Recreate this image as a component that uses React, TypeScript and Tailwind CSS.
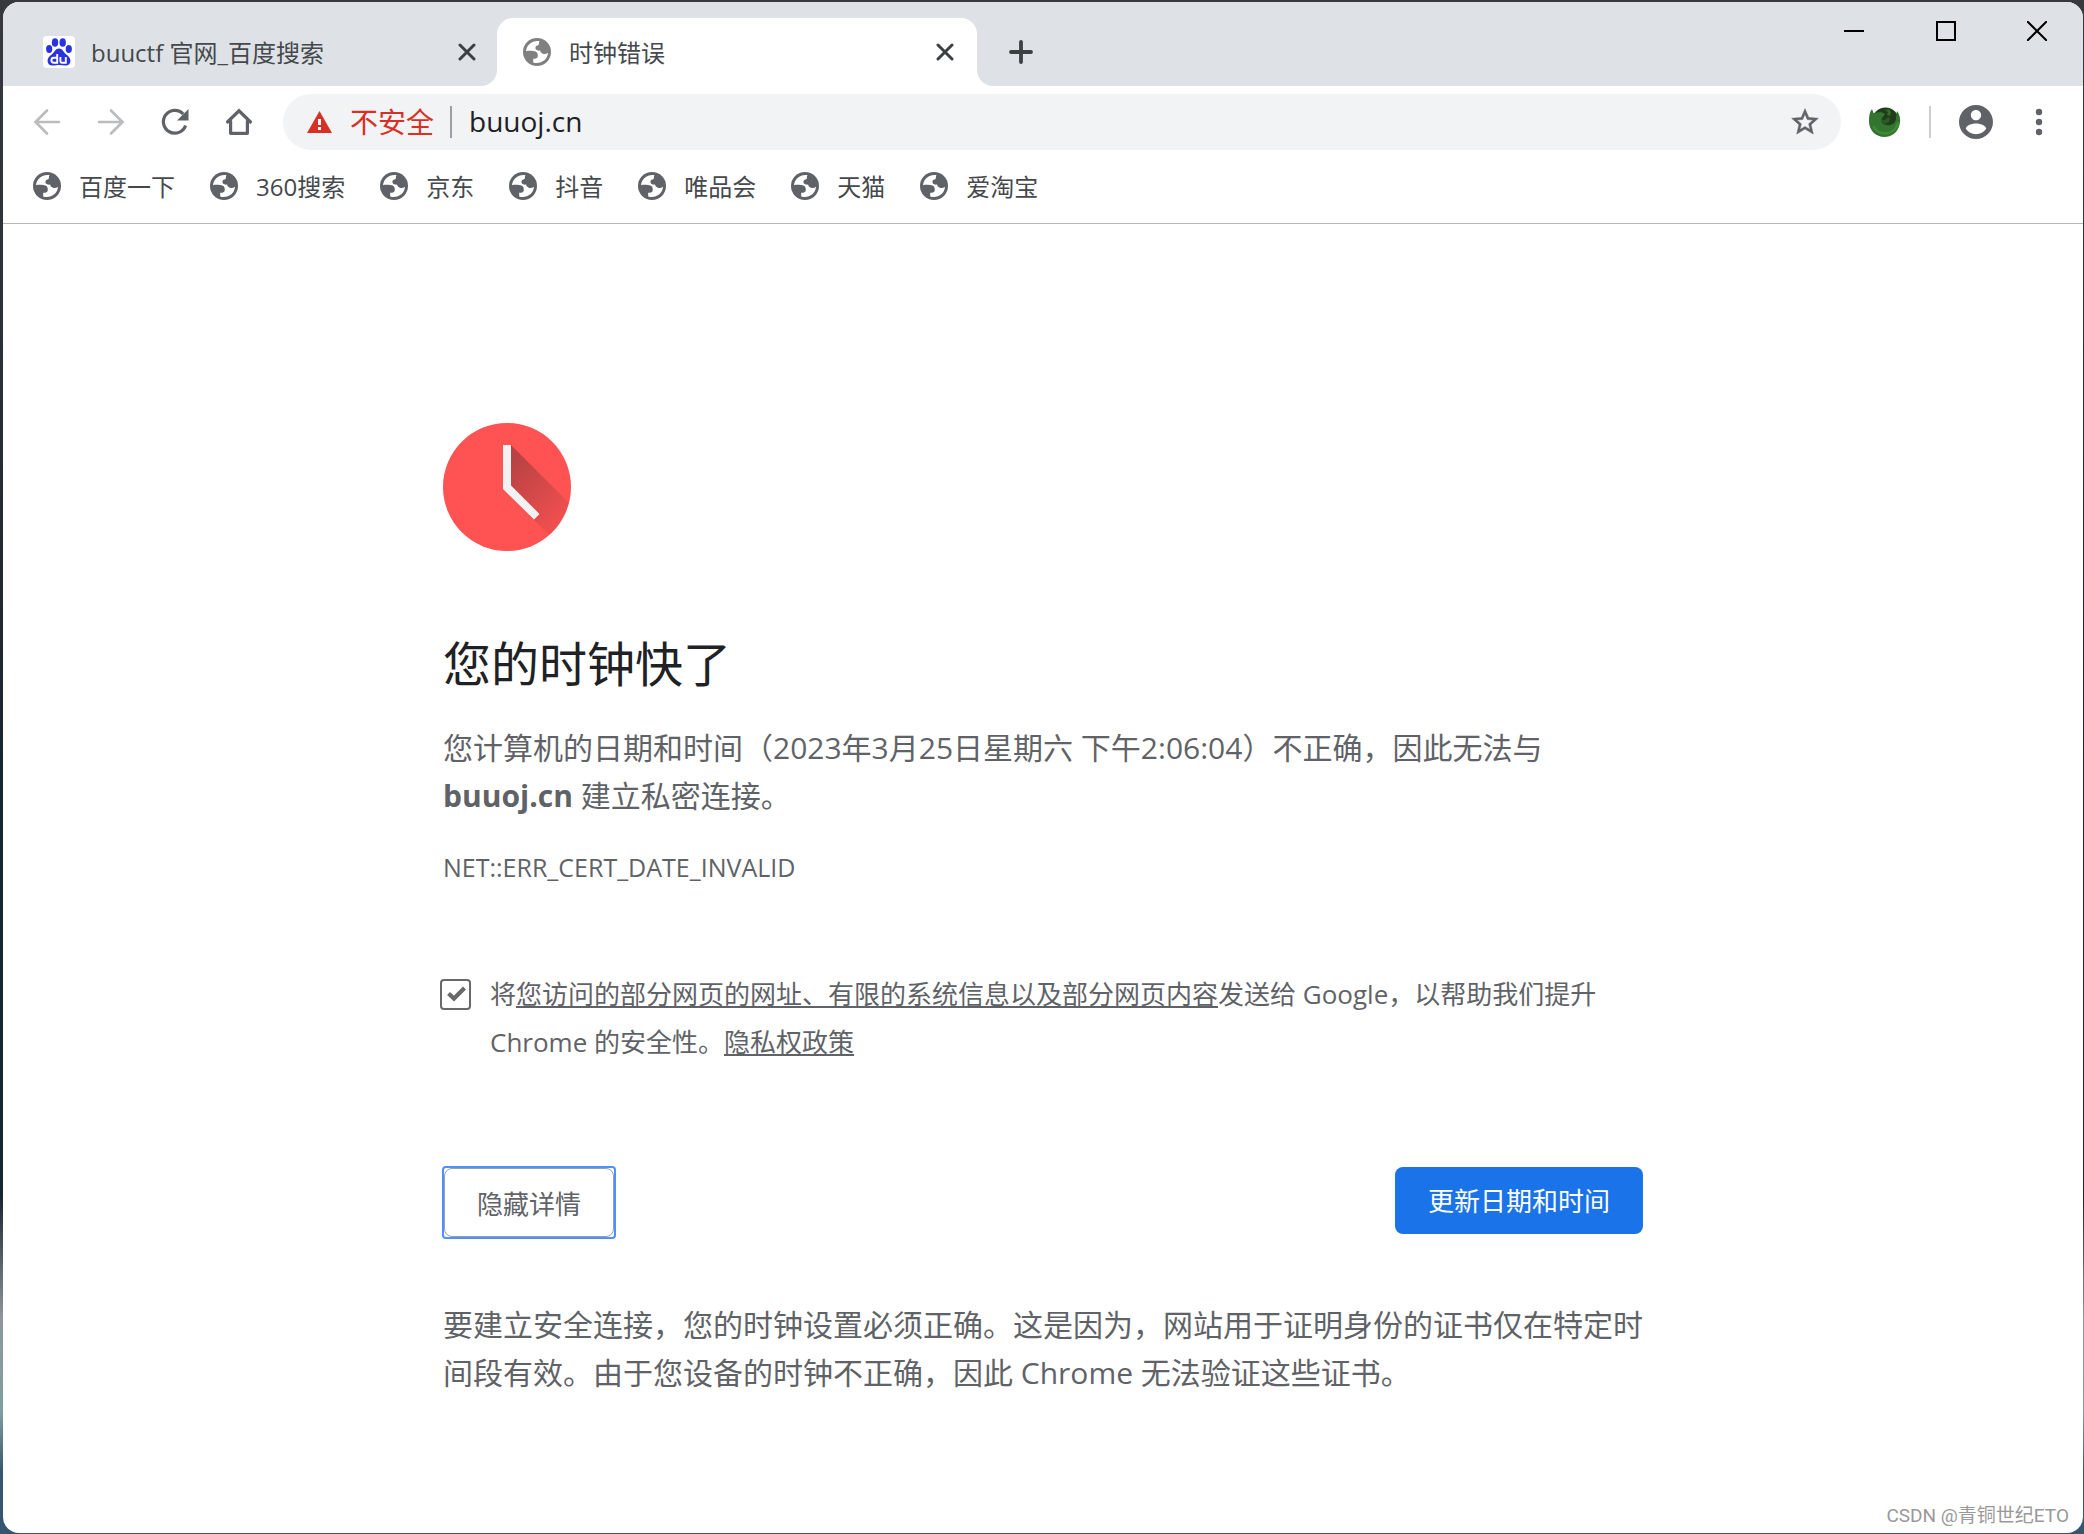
import clsx from 'clsx'
import type { ReactNode } from 'react'

const BOOKMARKS = ['百度一下', '360搜索', '京东', '抖音', '唯品会', '天猫', '爱淘宝']

function GlobeIcon({ className }: { className?: string }) {
  return (
    <svg viewBox="0 0 28 28" className={clsx('size-7 shrink-0', className)} aria-hidden="true">
      <circle cx="14" cy="14" r="14" fill="currentColor" />
      <path
        fill="#fff"
        d="M16.500 3.200C9.500 2 3.500 7 3 13.200c2.200-.5 4.500-.4 7.200-.1 3.300.3 4.700 1.800 4.600 4.600 0 1.500-.8 2.700-2.600 3l-2 .1v3.600c7 2.200 14.300-2.400 14.800-9.700-1.500 1.200-3.300 1.500-5.200 1-1.700-.5-2.500-1.600-2.700-3.100-1.700.2-3.200 0-4.100-1-1.200-1.500-.5-3.800 1.400-4.100 1.200-.2 1.600-.7 1.500-1.900-.1-1 .1-1.600.6-2.400z"
      />
    </svg>
  )
}

function BaiduIcon() {
  return (
    <svg viewBox="0 0 32 32" className="size-8 shrink-0" aria-hidden="true">
      <rect width="32" height="32" rx="4" fill="#fff" />
      <g fill="#2932e1">
        <ellipse cx="12" cy="6.500" rx="3.200" ry="4.300" />
        <ellipse cx="19.700" cy="6.500" rx="3.200" ry="4.300" />
        <ellipse cx="6.200" cy="13" rx="3.100" ry="4" />
        <ellipse cx="25.800" cy="13" rx="3.100" ry="4" />
        <path d="M16 12.500c-3.300 0-4.300 3.200-6.500 5.300C7.300 19.700 4.600 21.300 4.600 24.700c0 3.200 2.300 4.900 5.200 4.900 2.200 0 4-.5 6.200-.5s4 .5 6.200.5c2.900 0 5.200-1.700 5.200-4.900 0-3.400-2.700-5-4.900-6.900-2.200-2.100-3.200-5.300-6.500-5.300z" />
      </g>
      <g fill="none" stroke="#fff" strokeWidth="1.900">
        <path d="M14.200 18v8.800h-3.300c-1.500 0-2.500-1-2.500-2.500s1-2.500 2.500-2.500h3.300" />
        <path d="M17.400 21v4c0 1.200.6 1.800 1.800 1.800h3.600V21" />
      </g>
    </svg>
  )
}

function ExtensionIcon() {
  return (
    <svg viewBox="0 0 32 32" className="size-8" aria-hidden="true">
      <circle cx="16.500" cy="15" r="13.500" fill="#1f3d1a" />
      <path
        fill="#33752f"
        d="M3 3l1.500 4L12 6l4 2-3 4-1 3c1 3 5 5 9 4 4-.8 6.500-4 6-8l1-6c3 4 4 9 2.500 14C28.500 27 22 31 15.500 31 7 31 0 24.500 0 15.500 0 10 .5 6 3 3z"
      />
      <path fill="#2a5a25" d="M12 13l4 1 3-3 2 1-1 4-4 2-4-2z" />
      <path fill="#3f8a38" d="M16 4l4-1 2 3-1 4-3-1 1-3z" opacity=".6" />
      <path fill="none" stroke="#449a3d" strokeWidth="2.500" strokeLinecap="round" d="M5 21c3 6 11 8 17 5 4-2 6-5 7-9" opacity=".6" />
    </svg>
  )
}

function CloseGlyph() {
  return (
    <svg viewBox="0 0 18 18" className="size-[18px]" stroke="#3c4043" strokeWidth="3" strokeLinecap="round" aria-hidden="true">
      <path d="M2 2l14 14M16 2L2 16" />
    </svg>
  )
}

function IconButton({ label, className, children }: { label: string; className?: string; children: ReactNode }) {
  return (
    <button type="button" aria-label={label} className={clsx('flex shrink-0 items-center justify-center', className)}>
      {children}
    </button>
  )
}

function TabStrip() {
  return (
    <div className="flex h-[84px] bg-[#dee1e6] text-2xl text-[#45494d]">
      <div className="flex w-[494px] items-center pt-4 pr-[21px] pl-10">
        <BaiduIcon />
        <span className="ml-4 flex-1 pt-0.5">buuctf 官网_百度搜索</span>
        <IconButton label="关闭标签页" className="size-[18px]">
          <CloseGlyph />
        </IconButton>
      </div>
      <div className="relative mt-4 flex w-[480px] items-center rounded-t-2xl bg-white pr-[23px] pl-[26px]">
        {/* flared feet of the active tab */}
        <div className="absolute bottom-0 -left-4 size-4 bg-white">
          <div className="size-4 rounded-br-2xl bg-[#dee1e6]" />
        </div>
        <div className="absolute -right-4 bottom-0 size-4 bg-white">
          <div className="size-4 rounded-bl-2xl bg-[#dee1e6]" />
        </div>
        <GlobeIcon className="text-[#808080]" />
        <span className="ml-[18px] flex-1 pt-0.5">时钟错误</span>
        <IconButton label="关闭标签页" className="size-[18px]">
          <CloseGlyph />
        </IconButton>
      </div>
      <IconButton label="新标签页" className="mt-4 ml-8 size-6 self-center">
        <svg viewBox="0 0 24 24" className="size-6" stroke="#3c4043" strokeWidth="3.800" strokeLinecap="round">
          <path d="M12 2v20M2 12h20" />
        </svg>
      </IconButton>
      <div className="ml-auto flex h-[58px]">
        <IconButton label="最小化" className="w-[92px]">
          <svg viewBox="0 0 20 20" className="size-5" stroke="#000" strokeWidth="2">
            <path d="M0 10h20" />
          </svg>
        </IconButton>
        <IconButton label="最大化" className="w-[91px]">
          <svg viewBox="0 0 20 20" className="size-5" fill="none" stroke="#000" strokeWidth="2">
            <path d="M1 1h18v18H1z" />
          </svg>
        </IconButton>
        <IconButton label="关闭" className="w-[92px]">
          <svg viewBox="0 0 20 20" className="size-5" stroke="#000" strokeWidth="2">
            <path d="M0 0l20 20M20 0L0 20" />
          </svg>
        </IconButton>
      </div>
    </div>
  )
}

function Toolbar() {
  return (
    <div className="flex items-center pt-2 pr-7 pl-[26px]">
      <div className="flex gap-7 pr-[26px] text-[#5f6368]">
        <IconButton label="后退" className="size-9 text-[#babcbe]">
          <svg viewBox="0 0 32 32" className="size-8" fill="none" stroke="currentColor" strokeWidth="2.700" strokeLinecap="round">
            <path d="M28 16H5M16 4.500L4.500 16 16 27.500" />
          </svg>
        </IconButton>
        <IconButton label="前进" className="size-9 text-[#babcbe]">
          <svg viewBox="0 0 32 32" className="size-8" fill="none" stroke="currentColor" strokeWidth="2.700" strokeLinecap="round">
            <path d="M4 16h23M16 4.500L27.500 16 16 27.500" />
          </svg>
        </IconButton>
        <IconButton label="重新加载" className="size-9">
          <svg viewBox="0 0 32 32" className="size-8" aria-hidden="true">
            <path fill="none" stroke="currentColor" strokeWidth="3.200" d="M26.600 19.500A11.400 11.400 0 1 1 24.200 8" />
            <path fill="currentColor" d="M29.500 3v11.500H18z" />
          </svg>
        </IconButton>
        <IconButton label="主页" className="size-9">
          <svg viewBox="0 0 32 32" className="size-8" fill="none" stroke="currentColor" strokeWidth="3.200" strokeLinejoin="round" strokeLinecap="round">
            <path d="M4.500 16L16 4.800 27.500 16" strokeLinejoin="miter" />
            <path d="M7.600 15v12.300h16.800V15" />
          </svg>
        </IconButton>
      </div>

      <div className="flex h-14 flex-1 items-center rounded-full bg-[#f1f3f4] pr-5 pl-6 text-[28px]">
        <svg viewBox="0 0 25 22" className="h-[22px] w-[25px]" aria-hidden="true">
          <path fill="#d93025" d="M12.500 0L25 22H0z" />
          <path fill="#fff" d="M11 8h3v6h-3zM11 16h3v3h-3z" />
        </svg>
        <span className="ml-[18px] text-[#d93025]">不安全</span>
        <span className="mr-[17px] ml-4 h-8 w-0.5 bg-[#9aa0a6]" />
        <input aria-label="地址栏" defaultValue="buuoj.cn" className="min-w-0 flex-1 bg-transparent pb-0.5 text-[#202124] outline-none" />
        <IconButton label="添加书签" className="size-8">
          <svg viewBox="0 0 24 24" className="size-[34px]" fill="#5f6368" aria-hidden="true">
            <path
              stroke="#5f6368"
              strokeWidth=".4"
              d="M22 9.240l-7.190-.62L12 2 9.190 8.630 2 9.240l5.460 4.730L5.820 21 12 17.270 18.180 21l-1.630-7.030L22 9.240zM12 15.400l-3.760 2.270 1-4.280-3.320-2.880 4.380-.38L12 6.100l1.710 4.040 4.380.38-3.320 2.880 1 4.280L12 15.400z"
            />
          </svg>
        </IconButton>
      </div>

      <IconButton label="扩展程序" className="ml-7 size-8">
        <ExtensionIcon />
      </IconButton>
      <span className="mx-7 h-8 w-0.5 bg-[#cdcfd2]" />
      <IconButton label="用户" className="size-[34px]">
        <svg viewBox="2 2 20 20" className="size-[34px]" fill="#5f6368" aria-hidden="true">
          <path d="M12 2C6.480 2 2 6.480 2 12s4.480 10 10 10 10-4.480 10-10S17.520 2 12 2zm0 3c1.660 0 3 1.340 3 3s-1.340 3-3 3-3-1.340-3-3 1.340-3 3-3zm0 14.200c-2.500 0-4.710-1.280-6-3.220.03-1.990 4-3.080 6-3.080 1.990 0 5.970 1.090 6 3.080-1.290 1.940-3.500 3.220-6 3.220z" />
        </svg>
      </IconButton>
      <IconButton label="菜单" className="ml-[30px] size-8">
        <svg viewBox="0 0 32 32" className="size-8" fill="#5f6368" aria-hidden="true">
          <circle cx="16" cy="6" r="3.200" />
          <circle cx="16" cy="16" r="3.200" />
          <circle cx="16" cy="26" r="3.200" />
        </svg>
      </IconButton>
    </div>
  )
}

function BookmarksBar() {
  return (
    <nav className="flex h-[74px] items-center gap-[35px] border-b border-[#b6b6b6] pb-0.5 pl-[30px] text-2xl text-[#45494d]">
      {BOOKMARKS.map((name) => (
        <a key={name} href="#" className="flex items-center gap-[18px]">
          <GlobeIcon className="text-[#5f6368]" />
          <span className="pt-0.5">{name}</span>
        </a>
      ))}
    </nav>
  )
}

function ClockIcon() {
  return (
    <svg viewBox="0 0 128 128" className="size-32" aria-hidden="true">
      <defs>
        <linearGradient id="hand-shadow" gradientUnits="userSpaceOnUse" x1="62" y1="45" x2="115" y2="98">
          <stop offset="0" stopColor="#212121" stopOpacity=".32" />
          <stop offset="1" stopColor="#212121" stopOpacity=".07" />
        </linearGradient>
        <clipPath id="clock-face">
          <circle cx="64" cy="64" r="64" />
        </clipPath>
      </defs>
      <circle cx="64" cy="64" r="64" fill="#ff5252" />
      <path clipPath="url(#clock-face)" fill="url(#hand-shadow)" d="M68 22l80 80v52L60 66z" />
      <path fill="#f2f2f2" d="M60 22h8v40.500l28.500 28.500-5.500 5.500L60 66z" />
    </svg>
  )
}

function ErrorPage() {
  return (
    <main className="mx-auto w-full max-w-[1200px] pt-[199px] text-[#5f6368]">
      <ClockIcon />
      <h1 className="mt-[84px] text-5xl leading-[58px] text-[#202124]">您的时钟快了</h1>
      <p className="mt-[31px] text-3xl leading-[48px]">
        您计算机的日期和时间（2023年3月25日星期六 下午2:06:04）不正确，因此无法与 <strong>buuoj.cn</strong> 建立私密连接。
      </p>
      <div className="mt-[23px] text-[25px] leading-[48px]">NET::ERR_CERT_DATE_INVALID</div>

      <div className="mt-[79px] -ml-[3px] flex text-[26px] leading-[48px]">
        <span className="mt-[9px] mr-[19px] grid size-[31px] shrink-0">
          <input
            id="report"
            type="checkbox"
            defaultChecked
            className="col-start-1 row-start-1 size-[31px] appearance-none rounded border-2 border-[#696969] bg-white"
          />
          <svg viewBox="0 0 31 31" className="pointer-events-none col-start-1 row-start-1 size-[31px]" fill="none" stroke="#696969" strokeWidth="4.200" aria-hidden="true">
            <path d="M8.500 14.500l5.500 5L24.500 9" />
          </svg>
        </span>
        <label htmlFor="report">
          将
          <a href="#" className="underline">您访问的部分网页的网址、有限的系统信息以及部分网页内容</a>
          发送给 Google，以帮助我们提升 Chrome 的安全性。<a href="#" className="underline">隐私权政策</a>
        </label>
      </div>

      <div className="-ml-px mt-[100px] flex items-start justify-between text-[26px]">
        <div className="rounded-sm border-2 border-[#4d90fe]">
          <button type="button" className="h-[69px] rounded-lg border border-[#9aa0a6] px-8 pt-1">
            隐藏详情
          </button>
        </div>
        <button type="button" className="mt-px h-[67px] rounded-lg bg-[#1a73e8] px-[33px] pt-0.5 text-white">
          更新日期和时间
        </button>
      </div>

      <p className="mt-[62px] text-3xl leading-[48px]">
        要建立安全连接，您的时钟设置必须正确。这是因为，网站用于证明身份的证书仅在特定时间段有效。由于您设备的时钟不正确，因此 Chrome 无法验证这些证书。
      </p>
    </main>
  )
}

export default function App() {
  return (
    <div className="flex min-h-screen bg-[linear-gradient(to_bottom,#37393f_0%,#1b2431_50%,#1b2431_78%,#8f979c_86%,#7f9fa0_92%,#35566f_96%,#35566f_100%)] pt-0.5 pr-px pb-px pl-[3px] font-['Open_Sans','Noto_Sans_CJK_SC',sans-serif]">
      <div className="flex flex-1 flex-col overflow-hidden rounded-2xl bg-white">
        <TabStrip />
        <Toolbar />
        <BookmarksBar />
        <ErrorPage />
        <footer className="mt-auto pr-[14px] pb-[3px] text-right font-['Roboto','Noto_Sans_CJK_SC',sans-serif] text-[19px] text-[#999]">
          CSDN @青铜世纪ETO
        </footer>
      </div>
    </div>
  )
}
